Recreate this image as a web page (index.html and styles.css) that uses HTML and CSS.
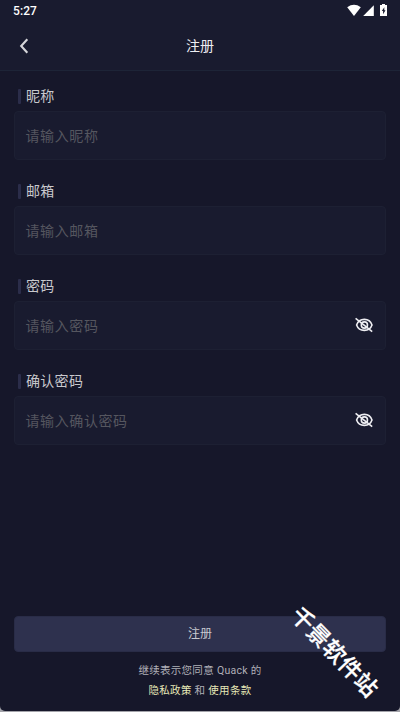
FILE: index.html
```html
<!DOCTYPE html>
<html lang="zh-CN">
<head>
<meta charset="utf-8">
<title>注册</title>
<link rel="stylesheet" href="styles.css">
</head>
<body>
<div class="screen">
  <header class="top">
    <div class="status">
      <span class="clock">5:27</span>
      <svg class="system" width="42" height="14" viewBox="0 0 42 14">
        <path fill="#fff" d="M0.2 3.2Q7-1.5 13.8 3.2L7 12z"/>
        <path fill="#fff" d="M26.8 1.3V12H16.2z"/>
        <path fill="#fff" d="M35 0h3v1h2v11h-7V1h2z"/>
        <path fill="#191b2f" d="M37.3 3.2l-2.5 3.8h1.3v3.2l2.4-4h-1.2z"/>
      </svg>
    </div>
    <nav class="nav">
      <svg class="back" width="10" height="16" viewBox="0 0 10 16"><path d="M8.3 1.3L2.2 8l6.1 6.7"/></svg>
      <h1>注册</h1>
    </nav>
  </header>
  <main class="form">
    <label class="field"><span class="label">昵称</span><span class="input">请输入昵称</span></label>
    <label class="field"><span class="label">邮箱</span><span class="input">请输入邮箱</span></label>
    <label class="field"><span class="label">密码</span><span class="input">请输入密码
      <svg class="eye" width="20" height="18" viewBox="0 0 20 18"><path d="M2.6 9C4 5 7 3.4 10.4 3.4S16.6 5 18 9c-1.4 4-4.2 5.4-7.6 5.4S4 13 2.6 9z"/><circle cx="10.4" cy="9" r="3.1"/><path d="M1.6 2.3l16.6 13.4"/></svg></span></label>
    <label class="field"><span class="label">确认密码</span><span class="input">请输入确认密码
      <svg class="eye" width="20" height="18" viewBox="0 0 20 18"><path d="M2.6 9C4 5 7 3.4 10.4 3.4S16.6 5 18 9c-1.4 4-4.2 5.4-7.6 5.4S4 13 2.6 9z"/><circle cx="10.4" cy="9" r="3.1"/><path d="M1.6 2.3l16.6 13.4"/></svg></span></label>
  </main>
  <footer class="bottom">
    <button class="submit">注册</button>
    <p>继续表示您同意 Quack 的<br><a>隐私政策</a> 和 <a>使用条款</a></p>
  </footer>
  <div class="watermark">千景软件站</div>
</div>
</body>
</html>
```
FILE: styles.css
```css
* { box-sizing: border-box; }
body { margin: 0; background: #a3a3aa; font-family: Roboto, "Noto Sans CJK SC", sans-serif; }
.screen { position: relative; display: flex; flex-direction: column; height: 711px; background: #16172a; border-radius: 0 0 5px 5px; overflow: hidden; }
.top { height: 71px; background: #191b2f; border-bottom: 1px solid #1d2437; }
.status { height: 22px; display: flex; justify-content: space-between; align-items: center; padding: 0 11px 0 13px; }
.clock { color: #fff; font-size: 12px; font-weight: 500; letter-spacing: .1px; }
.nav { height: 48px; display: grid; grid-template-columns: 40px 1fr 40px; align-items: center; }
.back { margin-left: 19px; fill: none; stroke: #d5d5d9; stroke-width: 2.1; }
h1 { margin: -1px 0 0; text-align: center; color: #eeeef2; font-size: 14px; font-weight: 400; line-height: 20px; }
.form { flex: 1; padding: 14px 14px 0; }
.field { display: block; height: 95px; }
.label { display: flex; align-items: center; height: 20px; margin-bottom: 6px; color: #c8c8cd; font-size: 14px; letter-spacing: .3px; }
.label::before { content: ""; width: 3px; height: 15px; margin: 2px 5px 0 4px; border-radius: 1px; background: #2b2d4a; flex: none; }
.input { display: flex; align-items: center; justify-content: space-between; height: 49px; padding: 0 11px 1px 10.5px; border: 1px solid #1d2033; border-radius: 4px; background: #191b2f; color: #55565f; font-size: 14px; letter-spacing: .6px; }
.eye { fill: none; stroke: #eeeef2; stroke-width: 1.6; }
.bottom { padding: 0 14px 10px; text-align: center; }
.submit { display: block; width: 100%; height: 36px; padding: 0 0 3px; border: 1px solid #292c47; border-radius: 4px; background: #2e314e; color: #c8c9d0; font: 12px Roboto, "Noto Sans CJK SC", sans-serif; }
p { margin: 9px 0 0; font-size: 10.5px; line-height: 20px; color: #b0b0b8; letter-spacing: .3px; }
a { color: #e6e8b6; }
.watermark { position: absolute; left: 272px; top: 636px; width: 125px; height: 32px; line-height: 32px; text-align: center; color: #fff; font-size: 22.5px; letter-spacing: .3px; font-weight: 500; -webkit-text-stroke: .3px #fff; white-space: nowrap; transform: rotate(46deg); }
```
